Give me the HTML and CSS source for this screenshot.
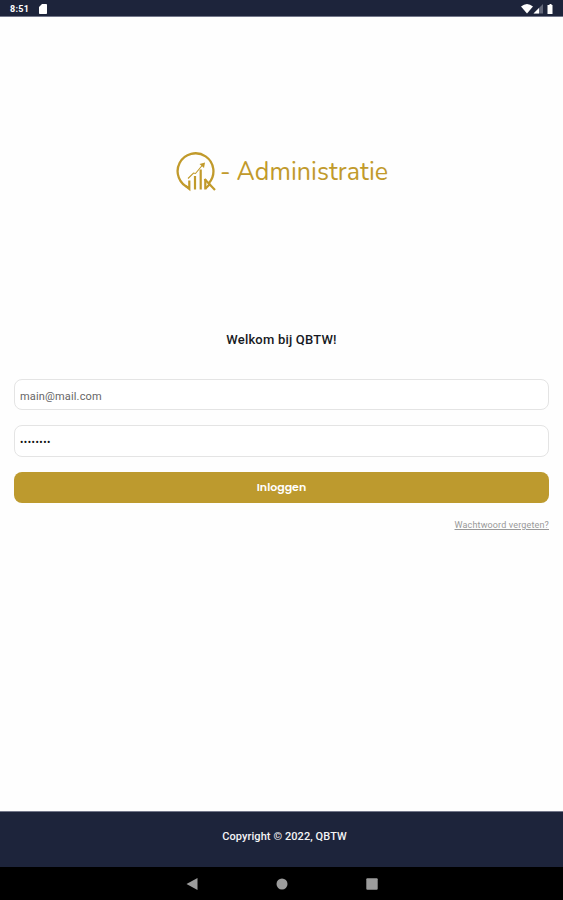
FILE: index.html
```html
<!DOCTYPE html>
<html lang="nl">
<head>
<meta charset="UTF-8">
<meta name="viewport" content="width=device-width, initial-scale=1.0">
<title>Q - Administratie</title>
<link rel="stylesheet" href="styles.css">
</head>
<body>
<div class="status-bar">
    <span class="clock">8:51</span>
    <svg class="sd-card" width="8" height="10" viewBox="0 0 8 10"><path d="M3 0h4.2q.8 0 .8.8v8.4q0 .8-.8.8H.8Q0 10 0 9.200V3z"/></svg>
    <svg class="signals" width="32" height="10" viewBox="0 0 32 10">
        <path d="M0 2.500Q6 -2.500 12 2.500L6 9.500z"/>
        <path class="dim" d="M22 0v9.500h-9.500z"/>
        <path d="M18 4v5.500h-5.500z"/>
        <path d="M27.500 1h1V0h2v1h1v9h-5V1z"/>
    </svg>
</div>
<main>
    <div class="logo">
        <svg width="40" height="40" viewBox="0 0 40 40">
            <path class="ring" d="M13.300 36A17.900 17.900 0 1 1 33 31"/>
            <path class="bars" d="M9.500 34l3.800 3V28.500M19 24v13.500M24.700 17.500v20M29.300 27v10.500"/>
            <path class="bars" d="M28.500 27L39 38M29.500 36.500l5-5"/>
            <path class="arrow" d="M12 26.500l5.500-5.500 2 .5 7-8.500"/>
            <path class="tip" d="M23.500 12l5.500-1.500-1 5.500z"/>
        </svg>
        <span class="dash">-</span>
        <span class="name">Administratie</span>
    </div>
    <h1>Welkom bij QBTW!</h1>
    <form>
        <input type="text" value="main@mail.com">
        <input class="password" type="password" value="12345678">
        <button type="button"><span>Inloggen</span></button>
        <a href="#">Wachtwoord vergeten?</a>
    </form>
</main>
<footer><span>Copyright © 2022, QBTW</span></footer>
<!-- android navigation -->
<div class="nav-bar">
    <svg width="12" height="14" viewBox="0 0 12 14"><path d="M11.500 1v12L.5 7z"/></svg>
    <svg width="12" height="14" viewBox="0 0 12 14"><circle cx="6" cy="7" r="5.500"/></svg>
    <svg width="12" height="14" viewBox="0 0 12 14"><rect x=".3" y="1.300" width="11.400" height="11.400" rx="1"/></svg>
</div>
</body>
</html>
```

FILE: styles.css
```css
* { box-sizing: border-box; }
body {
    margin: 0;
    height: 900px;
    display: flex;
    flex-direction: column;
    background: #fefefe;
    font-family: Roboto, sans-serif;
}
.status-bar {
    height: 17px;
    padding: 1px 10px 0;
    display: flex;
    align-items: center;
    background: #1d243b;
    border-bottom: 1px solid #73778a;
    color: #fff;
}
.clock {
    width: 29px;
    font-size: 9px;
    font-weight: 700;
    letter-spacing: .3px;
}
.status-bar svg { fill: #fff; }
.signals { margin-left: auto; }
.signals .dim { fill: #626779; }
main {
    flex: 1;
    padding: 135px 14px 0;
}
/* Logo */
.logo {
    height: 40px;
    padding-left: 162px;
    display: flex;
    align-items: center;
    color: #c19a2b;
    font-family: "Nunito", "Open Sans", sans-serif;
    font-size: 25px;
    line-height: 40px;
}
.logo svg {
    fill: none;
    stroke: #c19a2b;
}
.ring { stroke-width: 2.3; }
.bars { stroke-width: 2.2; }
.arrow { stroke-width: 1.1; }
.tip {
    fill: #c19a2b;
    stroke: none;
}
.dash { margin: 0 6px 0 4px; }
.name { letter-spacing: .08px; }
h1 {
    margin: 138px 0 0;
    color: #171923;
    font-size: 13px;
    font-weight: 500;
    letter-spacing: .2px;
    line-height: 20px;
    text-align: center;
}
form {
    margin-top: 29px;
    display: flex;
    flex-direction: column;
}
input {
    height: 31px;
    margin-bottom: 15px;
    padding: 3px 5px 0;
    border: 1px solid #e4e4e4;
    border-radius: 8px;
    background: #fff;
    color: #666;
    font-family: Roboto, sans-serif;
    font-size: 11px;
    letter-spacing: .15px;
}
.password {
    height: 32px;
    padding-top: 2px;
    color: #111;
    font-size: 10px;
    letter-spacing: .5px;
}
button {
    height: 31px;
    border: 0;
    border-radius: 8px;
    background: #bd9a2e;
    color: #fff;
    font-family: Poppins, Nunito, sans-serif;
    font-size: 11px;
    font-weight: 600;
}
a {
    margin-top: 16px;
    align-self: flex-end;
    color: #999;
    font-size: 9px;
    letter-spacing: .15px;
    line-height: 12px;
}
footer {
    height: 56px;
    padding-top: 17px;
    background: #1d243b;
    border-top: 1px solid #73778a;
    color: #f4f4f6;
    font-size: 11px;
    font-weight: 500;
    letter-spacing: .08px;
    line-height: 16px;
    text-align: center;
}
footer span { margin-left: 6px; }
.nav-bar {
    height: 33px;
    display: flex;
    justify-content: center;
    align-items: center;
    gap: 78px;
    background: #000;
}
.nav-bar svg { fill: #9c9c9c; }
```
